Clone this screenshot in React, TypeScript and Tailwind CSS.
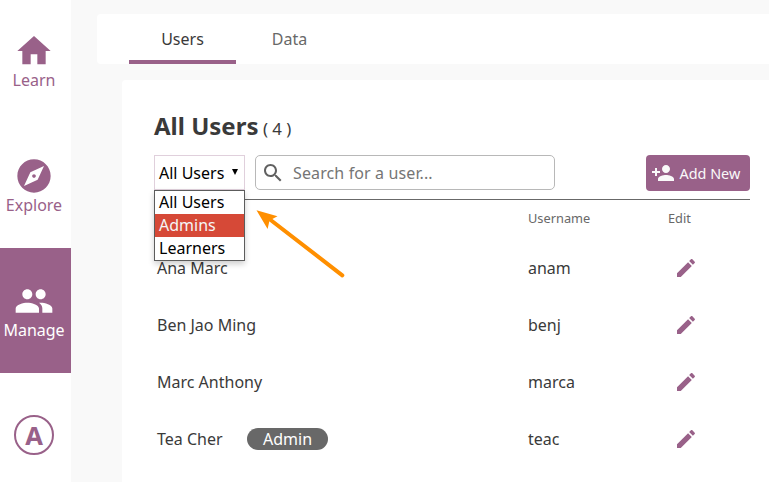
import React from "react";

const ICONS = {
  home: "M10 20v-6h4v6h5v-8h3L12 3 2 12h3v8z",
  explore:
    "M12 10.9c-.61 0-1.1.49-1.1 1.1s.49 1.1 1.1 1.1c.61 0 1.1-.49 1.1-1.1s-.49-1.1-1.1-1.1zM12 2C6.48 2 2 6.48 2 12s4.48 10 10 10 10-4.48 10-10S17.52 2 12 2zm2.19 12.19L6 18l3.81-8.19L18 6l-3.81 8.19z",
  people:
    "M16 11c1.66 0 2.99-1.34 2.99-3S17.66 5 16 5c-1.66 0-3 1.34-3 3s1.34 3 3 3zm-8 0c1.66 0 2.99-1.34 2.99-3S9.66 5 8 5C6.34 5 5 6.34 5 8s1.34 3 3 3zm0 2c-2.33 0-7 1.17-7 3.5V19h14v-2.5c0-2.33-4.67-3.5-7-3.5zm8 0c-.29 0-.62.02-.97.05 1.16.84 1.97 1.97 1.97 3.45V19h6v-2.5c0-2.33-4.67-3.5-7-3.5z",
  search:
    "M15.5 14h-.79l-.28-.27C15.41 12.59 16 11.11 16 9.5 16 5.91 13.09 3 9.5 3S3 5.91 3 9.5 5.91 16 9.5 16c1.61 0 3.09-.59 4.23-1.57l.27.28v.79l5 4.99L20.49 19l-4.99-5zm-6 0C7.01 14 5 11.99 5 9.5S7.01 5 9.5 5 14 7.01 14 9.5 11.99 14 9.5 14z",
  personAdd:
    "M15 12c2.21 0 4-1.79 4-4s-1.79-4-4-4-4 1.79-4 4 1.79 4 4 4zm-9-2V7H4v3H1v2h3v3h2v-3h3v-2H6zm9 4c-2.67 0-8 1.34-8 4v2h16v-2c0-2.66-5.33-4-8-4z",
  edit: "M3 17.25V21h3.75L17.81 9.94l-3.75-3.75L3 17.25zM20.71 7.04c.39-.39.39-1.02 0-1.41l-2.34-2.34c-.39-.39-1.02-.39-1.41 0l-1.83 1.83 3.75 3.75 1.83-1.83z",
};

function Icon({ name, className }: { name: keyof typeof ICONS; className: string }) {
  return (
    <svg viewBox="0 0 24 24" fill="currentColor" className={`shrink-0 ${className}`}>
      <path d={ICONS[name]} />
    </svg>
  );
}

function NavItem({ icon, label, active }: { icon: keyof typeof ICONS; label: string; active?: boolean }) {
  return (
    <a
      className={`flex h-[125px] shrink-0 flex-col items-center pt-[33px] pr-[3px] ${
        active ? "bg-[#996189] text-white" : "text-[#996189]"
      }`}
    >
      <Icon name={icon} className="size-10" />
      <span className="-mt-0.5 leading-[22px]">{label}</span>
    </a>
  );
}

const USERS = [
  { name: "Ana Marc", username: "anam" },
  { name: "Ben Jao Ming", username: "benj" },
  { name: "Marc Anthony", username: "marca" },
  { name: "Tea Cher", username: "teac", admin: true },
];

export default function App() {
  return (
    <div className="flex h-[482px] w-[769px] overflow-hidden bg-[#f9f9f9] font-['Noto_Sans',sans-serif] text-base text-[#3a3a3a]">
      <nav className="-mt-0.5 flex w-[71px] shrink-0 flex-col bg-white">
        <NavItem icon="home" label="Learn" />
        <NavItem icon="explore" label="Explore" />
        <NavItem icon="people" label="Manage" active />
        <div className="mt-[42px] ml-3.5 flex size-10 items-center justify-center rounded-full border-2 border-[#996189] pt-0.5 text-[25.6px] leading-9 font-bold text-[#996189]">
          A
        </div>
      </nav>

      <main className="flex min-w-0 grow flex-col pt-3.5 pl-[26px]">
        <div className="flex h-[50px] shrink-0 rounded-l bg-white pl-8">
          <a className="flex w-[107px] justify-center border-b-4 border-[#996189] pt-3.5 leading-[22px]">Users</a>
          <a className="flex w-[107px] justify-center pt-3.5 leading-[22px] text-[#686868]">Data</a>
        </div>

        <section className="mt-4 ml-[25px] grow rounded-tl bg-white pr-[19px] pl-8">
          <h1 className="flex h-[75px] items-baseline pt-[30px] text-2xl leading-8 font-bold">
            All Users
            <span className="ml-[4.5px] text-[16.8px] font-normal">( 4 )</span>
          </h1>

          <div className="flex h-[45px] items-start border-b border-[#686868]">
            <div className="relative h-[35px] w-[91px] border border-[#e0d0dc] text-black">
              <div className="flex h-full items-center pl-1 leading-[22px]">
                All Users
                <svg viewBox="0 0 6 6" className="mb-px ml-[8px] size-1.5" fill="currentColor">
                  <path d="M0 0h6L3 6z" />
                </svg>
              </div>
              <ul className="absolute top-[34px] -left-px z-10 w-[91px] border border-[#5c5c5c] bg-white leading-[23px] shadow-[0_3px_6px_rgba(0,0,0,0.2)]">
                <li className="pl-1">All Users</li>
                <li className="bg-[#d64937] pl-1 text-[#f5f5f5]">Admins</li>
                <li className="pl-1">Learners</li>
              </ul>
              <svg viewBox="0 0 95 73" className="absolute top-[49px] left-[98px] z-10 h-[73px] w-[95px]">
                <path d="M17 14.5 L89.3 70.3" stroke="#ff8f00" strokeWidth="4" strokeLinecap="round" />
                <path d="M3.5 5.3 L24.5 11.3 L16.5 15.5 L14.6 24 Z" fill="#ff8f00" />
              </svg>
            </div>
            <div className="ml-2.5 flex h-[35px] w-[300px] items-center rounded-[5px] border border-[#b8b8b8] pl-[5px] text-[#757575]">
              <Icon name="search" className="size-6 text-[#616161]" />
              <span className="ml-2 leading-[22px] tracking-[0.12px]">Search for a user...</span>
            </div>
            <button className="ml-auto flex h-9 w-[104px] items-center rounded bg-[#996189] pl-[5px] text-[14.4px] leading-5 text-[#f9f9f9]">
              <Icon name="personAdd" className="size-6" />
              <span className="mt-px ml-[4.5px]">Add New</span>
            </button>
          </div>

          <div className="flex h-[39px] pt-2 text-[12.8px] leading-5 text-[#686868]">
            <span className="w-[374px]" />
            <span className="w-[140px]">Username</span>
            <span>Edit</span>
          </div>
          {USERS.map((user) => (
            <div key={user.username} className="flex h-[57px] items-center">
              <div className="flex w-[374px] items-center pl-[3px]">
                {user.name}
                {user.admin && (
                  <span className="ml-6 flex h-[22px] w-[81px] items-center justify-center rounded-full bg-[#686868] pl-px text-white">
                    Admin
                  </span>
                )}
              </div>
              <span className="w-[146px]">{user.username}</span>
              <Icon name="edit" className="size-6 text-[#996189]" />
            </div>
          ))}
        </section>
      </main>
    </div>
  );
}
